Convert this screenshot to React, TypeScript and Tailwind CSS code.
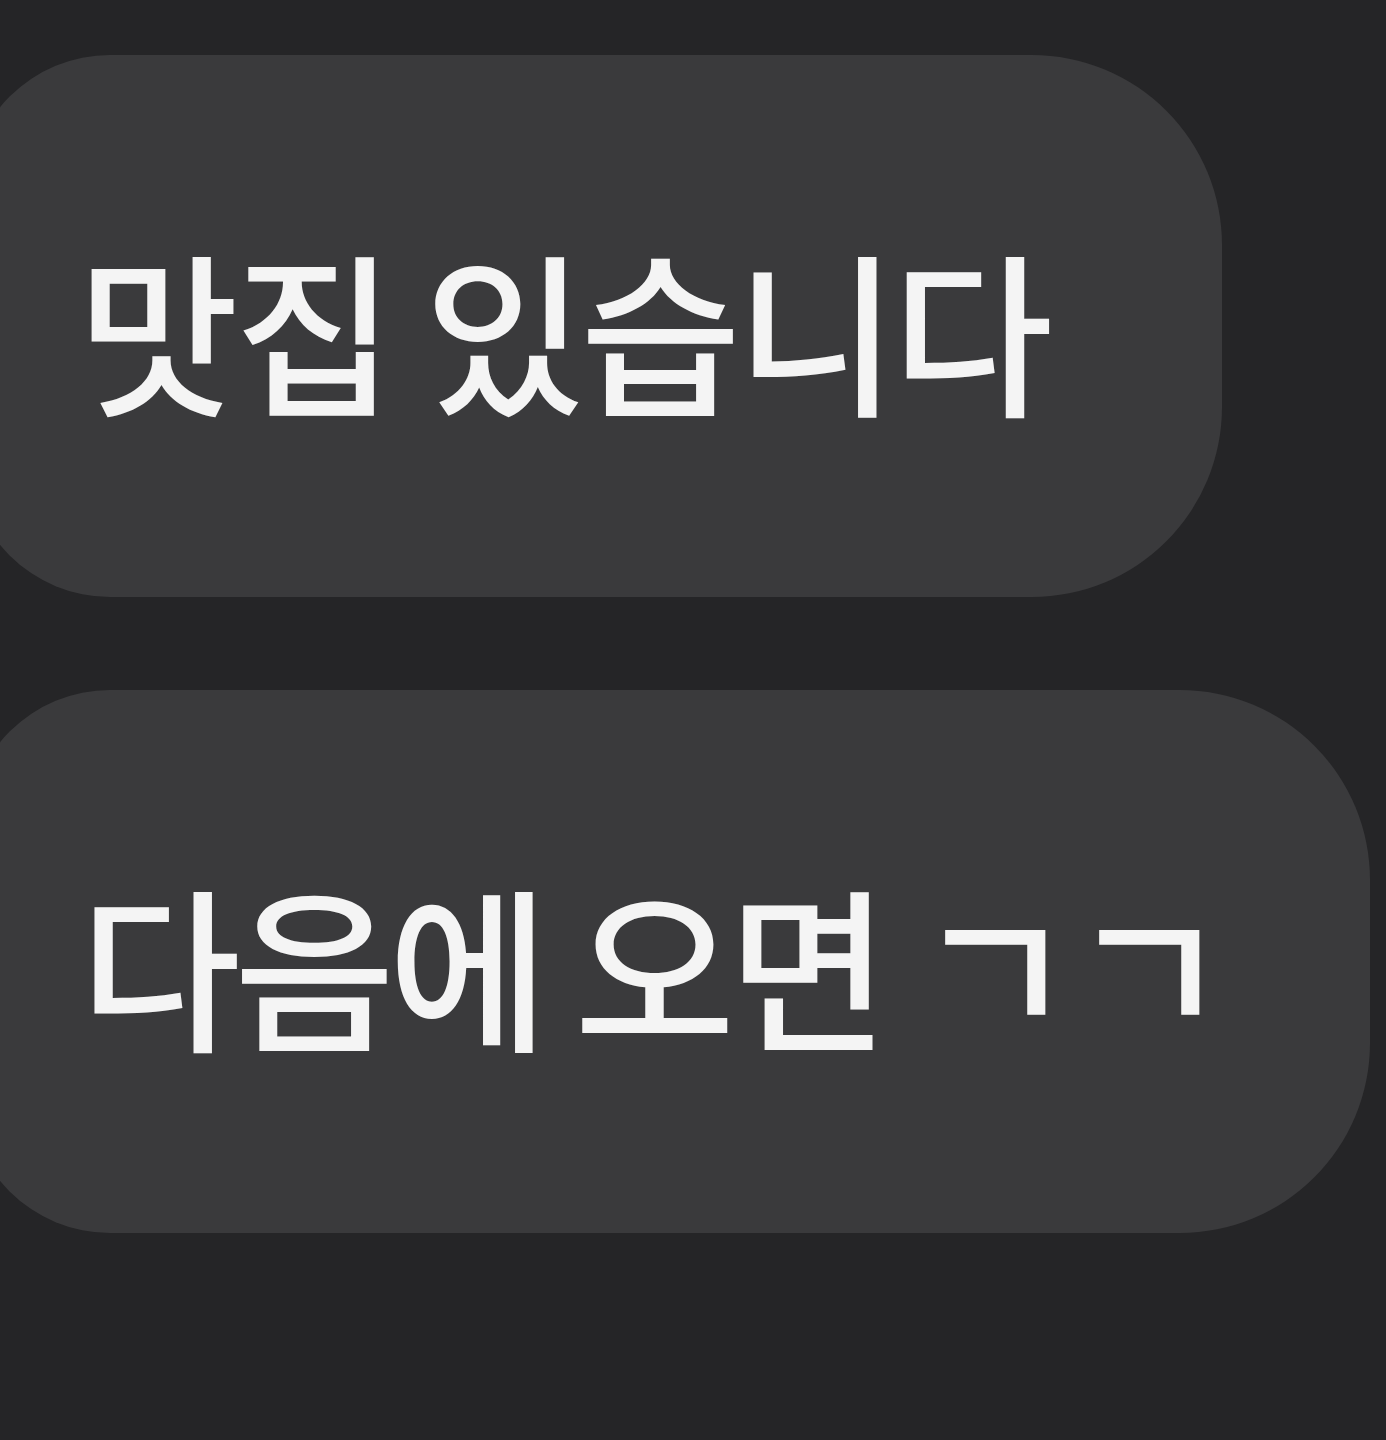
import React from "react";

export default function App() {
  return (
    <div className="w-[1386px] h-[1440px] overflow-hidden bg-[#252527] pt-[55px]">
      <div className="flex flex-col items-start gap-[93px] ml-[-32px]">
        <div className="w-[1254px] h-[542px] bg-[#3a3a3c] rounded-l-[142px] rounded-r-[190px] flex items-center pl-[110px]">
          <span
            className="text-[#f4f4f4] text-[175px] leading-none tracking-[-5px] font-medium whitespace-nowrap"
            style={{ fontFamily: '"Noto Sans CJK KR", "Noto Sans", sans-serif' }}
          >
            맛집 있습니다
          </span>
        </div>
        <div className="w-[1402px] h-[543px] bg-[#3a3a3c] rounded-l-[142px] rounded-r-[190px] flex items-center pl-[112px]">
          <span
            className="text-[#f4f4f4] text-[175px] leading-none tracking-[-7px] font-medium whitespace-nowrap"
            style={{ fontFamily: '"Noto Sans CJK KR", "Noto Sans", sans-serif' }}
          >
            다음에 오면 ㄱㄱ
          </span>
        </div>
      </div>
    </div>
  );
}
